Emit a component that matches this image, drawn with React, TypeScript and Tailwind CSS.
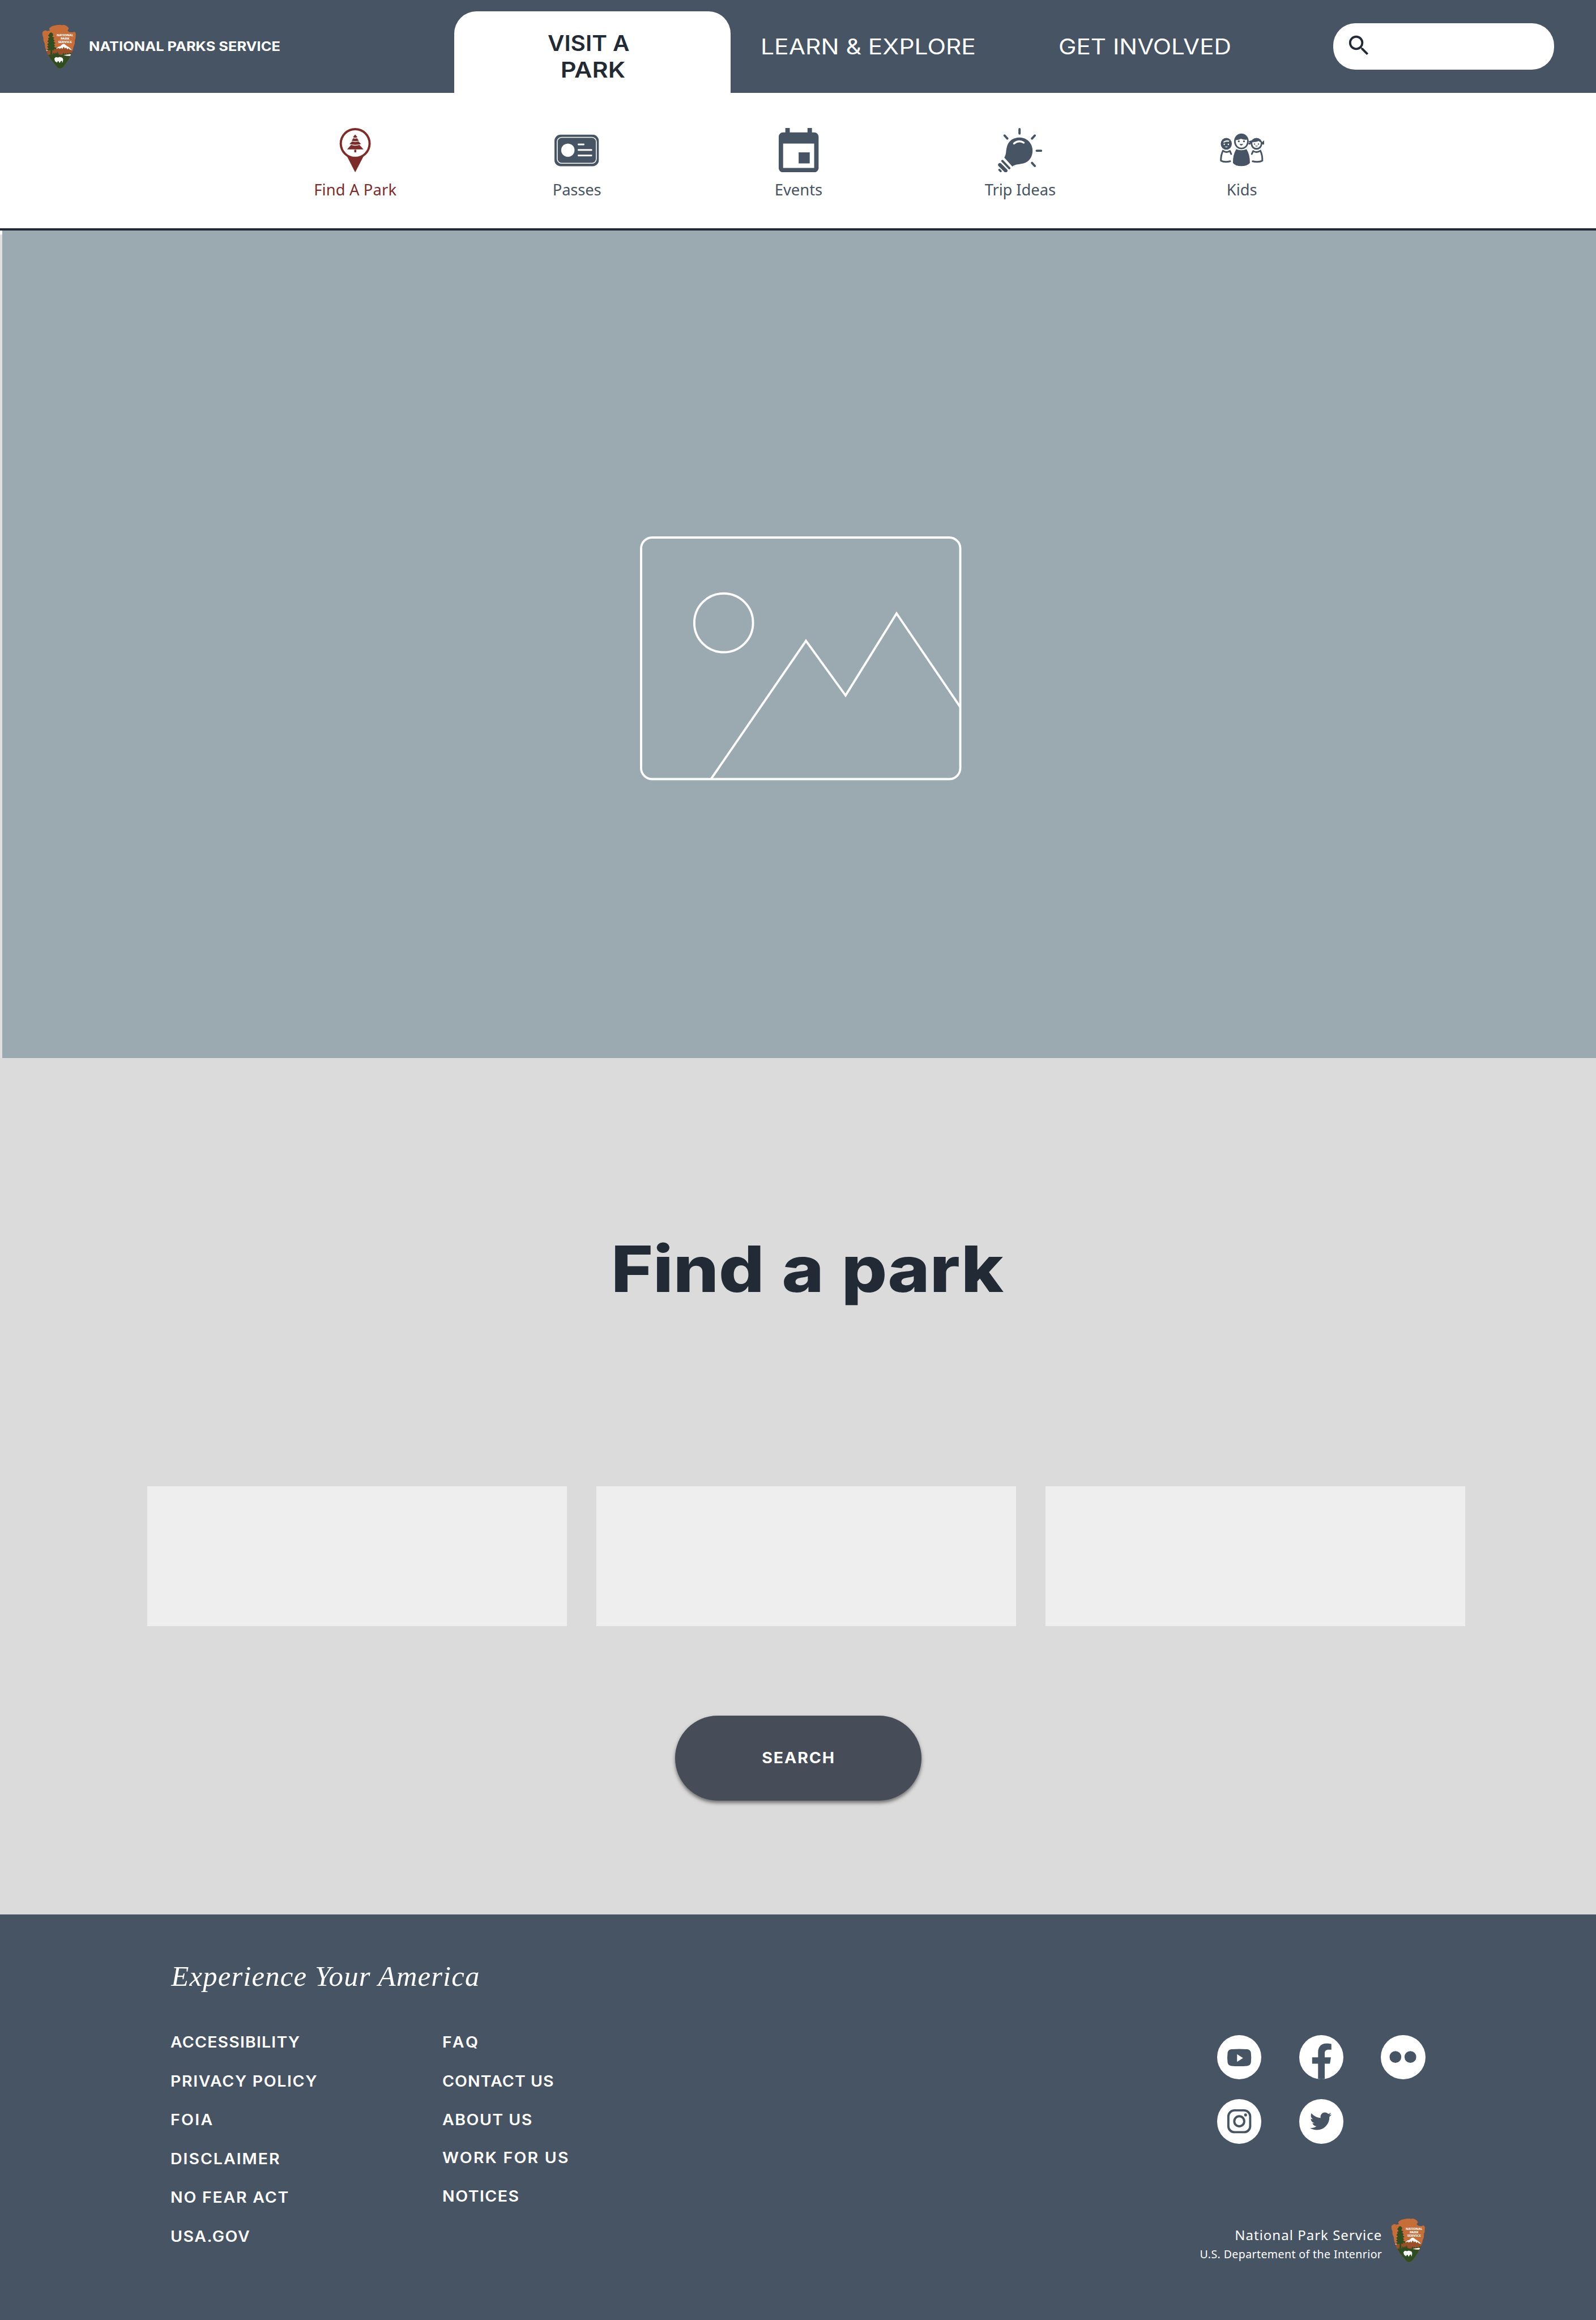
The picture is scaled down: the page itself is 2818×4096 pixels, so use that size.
import type { ReactNode } from 'react';
import { FaTwitter } from 'react-icons/fa';
import { MdSearch } from 'react-icons/md';

const SLATE = '#475464';

function ArrowheadLogo() {
  return (
    <svg viewBox="0 0 184 241" className="h-[80px] w-[62px] shrink-0">
      <defs>
        <clipPath id="arrowhead">
          <path d="M1 43L8 36L18 32L28 36L42 33L38 26L40 19L55 9L80 4L100 2L108 5L116 2L128 6L138 12L145 22L138 34L148 42L165 43L176 40L183 48L182 75L178 85L177 105L170 125L167 142L160 155L150 178L145 190L130 212L112 235L98 240L86 238L60 208L45 188L32 165L24 148L16 125L14 105L7 88L6 70L1 58Z" />
        </clipPath>
      </defs>
      <g clipPath="url(#arrowhead)">
        <rect width="184" height="241" fill="#c66d38" />
        <path d="M0 144L30 134L60 140L86 127L120 116L162 136L184 142V180H0Z" fill="#9a5129" />
        <path d="M16 143L34 136L36 141L24 144ZM76 133L88 122L98 119L110 108L120 106L134 117L148 126L164 141L150 137L142 129L138 136L130 126L124 132L117 122L108 135L106 126L94 134L92 128Z" fill="#fff" />
        <path d="M0 167L30 166L58 164L64 152L68 162L76 152L80 160L84 146L90 164L110 166L116 154L121 163L127 157L132 163L140 156L145 162L154 155L184 160V241H0Z" fill="#2f4d20" />
        <path d="M116 167L152 162L160 166L150 172L132 171Z" fill="#fff" />
        <path d="M44 164L46 140L30 142L26 136L35 130L26 122L34 116L27 108L36 100L28 92L35 84L32 76L40 70L32 60L38 54L42 46L50 44L58 50L60 60L54 66L66 72L60 80L68 88L62 94L72 102L64 108L70 116L64 122L76 128L74 136L64 134L66 142L54 140L56 166Z" fill="#2f4d20" />
        <path d="M66 186L74 178L86 180L96 177L110 182L114 190L112 206L108 208L109 200L104 198L99 203L96 210L92 206L90 200L84 202L80 209L76 204L70 200Z" fill="#fff" />
        <g fill="#fff" textAnchor="middle" className="font-['Noto_Sans'] text-[16px] font-extrabold">
          <text x="124" y="66" textLength="90" lengthAdjust="spacingAndGlyphs">NATIONAL</text>
          <text x="124" y="84" textLength="48" lengthAdjust="spacingAndGlyphs">PARK</text>
          <text x="124" y="102" textLength="74" lengthAdjust="spacingAndGlyphs">SERVICE</text>
        </g>
      </g>
    </svg>
  );
}

function PinIcon() {
  return (
    <svg viewBox="183 63 240 240" className="size-[80px]" fill="#7e2c2a">
      <path d="M256 211L303 303L351 211Z" />
      <circle cx="303" cy="147" r="78" fill="#fff" stroke="#7e2c2a" strokeWidth="12" />
      <path d="M303 98L291 112Q303 120 315 112ZM293 118Q303 123 313 118L323 131Q303 138 284 131ZM287 135Q303 142 320 135L335 150Q303 158 272 150ZM281 154Q303 163 326 154L348 179H259Z" />
      <rect x="298" y="180" width="11" height="15" rx="3" />
    </svg>
  );
}

function PassIcon() {
  return (
    <svg viewBox="0 0 80 80" className="size-[80px]">
      <rect y="12" width="80" height="57" rx="11" fill={SLATE} />
      <rect x="5" y="16.8" width="70.5" height="46.8" rx="8" fill="none" stroke="#fff" strokeWidth="1.6" />
      <circle cx="24.2" cy="40" r="12" fill="#fff" />
      <g fill="#fff">
        <rect x="42" y="28" width="12" height="3.2" rx="1" />
        <rect x="42" y="38" width="26" height="3.2" rx="1" />
        <rect x="42" y="48" width="26" height="3.2" rx="1" />
      </g>
    </svg>
  );
}

function EventIcon() {
  return (
    <svg viewBox="2 1 20 20" className="size-[80px]" fill={SLATE}>
      <path d="M17 12h-5v5h5v-5zM16 1v2H8V1H6v2H5c-1.11 0-1.99.9-1.99 2L3 19c0 1.1.89 2 2 2h14c1.1 0 2-.9 2-2V5c0-1.1-.9-2-2-2h-1V1h-2zm3 18H5V8h14v11z" />
    </svg>
  );
}

function BulbIcon() {
  return (
    <svg viewBox="0 0 80 80" className="size-[80px]" fill="none" stroke={SLATE} strokeWidth="4" strokeLinecap="round">
      <path d="M39 2V10M12 13.5L17 19M66.5 13.5L61.5 19M70 41H78M61.5 63L66.5 68.5" />
      <path d="M11.5 53.5C15.5 47 14 42 16 35C18 24 27 17 39 17C52 17 62.5 27 62.5 41C62.5 53 56 61 46 64C38 66 32 65 26 69.5Z" fill={SLATE} stroke="none" />
      <path d="M29 28Q38 21 46.5 26.5" stroke="#fff" strokeWidth="3.4" />
      <path d="M8 59.5L20.5 72.5" />
      <path d="M3.5 66.5L14 77" strokeWidth="6.5" />
      <path d="M2.5 75.5L5 78" strokeWidth="3.6" />
    </svg>
  );
}

function KidsIcon() {
  return (
    <svg viewBox="0 0 80 80" className="size-[80px]" fill={SLATE}>
      <ellipse cx="11.5" cy="28.5" rx="10" ry="10.6" />
      <path d="M6 25Q11 20.500 17 23L16 25Q11 23.500 7 26.500Z" fill="#fff" />
      <circle cx="7.800" cy="29.500" r="1.300" fill="#fff" />
      <circle cx="15.200" cy="29.500" r="1.300" fill="#fff" />
      <path d="M8.500 33.500H14.500Q11.500 36.500 8.500 33.500Z" fill="#fff" />
      <path d="M5.500 41Q1.500 49 1.800 59Q8 62.500 18.500 60M5.500 41Q11.500 45.500 18 41.500L20.300 47" fill="none" stroke={SLATE} strokeWidth="3" strokeLinecap="round" strokeLinejoin="round" />

      <path d="M51.500 24L58 22L57 29ZM74 27L80 22V30Z" />
      <circle cx="53.500" cy="28" r="2" />
      <circle cx="78" cy="28" r="2" />
      <ellipse cx="66" cy="28.500" rx="10.400" ry="10.600" />
      <path d="M58.500 25.500Q66 25.500 70 23.500Q71 25 73.500 25.500V29Q72.500 36 66 36Q59.500 36 58.500 29Z" fill="#fff" />
      <circle cx="62.500" cy="29" r="1.200" />
      <circle cx="69.500" cy="29" r="1.200" />
      <path d="M63 32H69Q66 35 63 32Z" />
      <path d="M73 41Q76.800 49 76.500 59Q70 62.500 59 60M73 41Q66 45.500 60 41.500L57.500 47" fill="none" stroke={SLATE} strokeWidth="3" strokeLinecap="round" strokeLinejoin="round" />

      <ellipse cx="38.700" cy="24.200" rx="13.200" ry="14.200" />
      <path d="M28.500 22Q34 22 38 19.500Q43 22 49 21V25Q47.500 35.500 38.700 35.500Q30 35.500 28.500 25Z" fill="#fff" />
      <circle cx="34" cy="24" r="1.700" />
      <circle cx="43.400" cy="24" r="1.700" />
      <path d="M35.500 29H42Q40 32 37.500 31.500Q36 31 35.500 29Z" />
      <path d="M29.500 38Q38.500 42 48 38Q54.500 49 54 63Q49 68.800 38.700 68.800Q28 68.800 23.500 63Q23 49 29.500 38Z" />
    </svg>
  );
}

function ImagePlaceholder() {
  return (
    <svg viewBox="0 0 580 440" className="h-[440px] w-[580px]" fill="none" stroke="#fff" strokeWidth="4">
      <rect x="2" y="2" width="576" height="436" rx="20" />
      <circle cx="151" cy="156" r="53" />
      <path d="M128 438L299.500 188.500L371 287L463 139L578 308" />
    </svg>
  );
}

const subNav: { label: string; icon: ReactNode; text: string }[] = [
  { label: 'Find A Park', icon: <PinIcon />, text: 'text-[#7e2c2a] tracking-[0.14px]' },
  { label: 'Passes', icon: <PassIcon />, text: 'text-[#475464] tracking-[-0.2px]' },
  { label: 'Events', icon: <EventIcon />, text: 'text-[#475464] tracking-[0px]' },
  { label: 'Trip Ideas', icon: <BulbIcon />, text: 'text-[#475464] tracking-[-0.1px]' },
  { label: 'Kids', icon: <KidsIcon />, text: 'text-[#475464] tracking-[0px]' },
];

const policyLinks = [
  ['ACCESSIBILITY', 'tracking-[1.1px]'],
  ['PRIVACY POLICY', 'tracking-[1.54px]'],
  ['FOIA', 'tracking-[2.2px]'],
  ['DISCLAIMER', 'tracking-[1.85px]'],
  ['NO FEAR ACT', 'tracking-[1.65px]'],
  ['USA.GOV', 'tracking-[1.4px]'],
];

const aboutLinks = [
  ['FAQ', 'tracking-[3.4px]'],
  ['CONTACT US', 'tracking-[1.0px]'],
  ['ABOUT US', 'tracking-[1.4px]'],
  ['WORK FOR US', '-mt-[2px] tracking-[2.1px]'],
  ['NOTICES', 'tracking-[1.4px]'],
];

function FooterLinks({ links, className }: { links: string[][]; className: string }) {
  return (
    <ul className={className}>
      {links.map(([label, extra]) => (
        <li key={label} className={`origin-left scale-x-[1.08] text-[27px] leading-[70px] font-semibold whitespace-nowrap ${extra}`}>
          {label}
        </li>
      ))}
    </ul>
  );
}

function Disc({ children }: { children: ReactNode }) {
  return <a className="flex size-[80px] items-center justify-center overflow-hidden rounded-full bg-white text-[#475464]">{children}</a>;
}

function SocialLinks() {
  return (
    <div className="grid grid-cols-[80px_80px_80px] gap-x-[68px] gap-y-[36px]">
      <Disc>
        <svg viewBox="0 0 80 80" className="size-[80px]">
          <path d="M26 25.600Q40 24.400 54 25.600Q60 26 61 31.500Q62.200 40.500 61 49.500Q60 55 54 55.600Q40 56.700 26 55.600Q20 55 19 49.500Q17.800 40.500 19 31.500Q20 26 26 25.600Z" fill={SLATE} />
          <path d="M36 34.500L46.800 41.500L36 48.400Z" fill="#fff" />
        </svg>
      </Disc>
      <Disc>
        <svg viewBox="0 0 80 80" className="size-[80px]">
          <path d="M34 80V51.500H23.300V40H34V31C34 21 40 15.200 49 15.200C53 15.200 58 16 58 16V26.300H53C48 26.300 46 29 46 32.500V40H57.200L55.400 51.500H46V80Z" fill={SLATE} />
        </svg>
      </Disc>
      <Disc>
        <svg viewBox="0 0 80 80" className="size-[80px]" fill={SLATE}>
          <circle cx="26.400" cy="39.500" r="10.600" />
          <circle cx="53.400" cy="39.500" r="10.600" />
        </svg>
      </Disc>
      <Disc>
        <svg viewBox="0 0 80 80" className="size-[80px]" fill="none" stroke={SLATE} strokeWidth="4">
          <rect x="20.300" y="20.300" width="39.400" height="39.400" rx="11" />
          <circle cx="40" cy="40" r="9" />
          <circle cx="51.400" cy="28.500" r="2.600" fill={SLATE} stroke="none" />
        </svg>
      </Disc>
      <Disc>
        <FaTwitter className="mr-[1px] size-[39px]" />
      </Disc>
    </div>
  );
}

export default function App() {
  return (
    <div className="h-[4096px] w-[2818px] overflow-hidden bg-[#475464]">
      <div className="flex h-[4187px] w-[2881px] flex-col bg-[#dbdbdb] font-['Inter',sans-serif] [zoom:0.97847]">
        <header className="flex h-[168px] shrink-0 items-center bg-[#475464] text-white">
          <div className="flex w-[820px] items-center pl-[76px]">
            <ArrowheadLogo />
            <span className="ml-[22px] origin-left scale-x-[1.13] text-[23px] font-bold whitespace-nowrap">NATIONAL PARKS SERVICE</span>
          </div>
          <div className="flex h-[148px] w-[498px] flex-col items-center self-end rounded-t-[40px] bg-white pt-[35px] text-[38.5px] leading-[48px] font-semibold text-[#222b35]">
            <span className="mr-[13px] scale-x-[1.075]">VISIT A</span>
            <span className="ml-[2px] scale-x-[1.147]">PARK</span>
          </div>
          <div className="ml-[55px] w-[537px] pt-[2px]">
            <span className="inline-block origin-left scale-x-[1.13] text-[38.5px] whitespace-nowrap">LEARN &amp; EXPLORE</span>
          </div>
          <div className="w-[496px] pt-[2px]">
            <span className="inline-block origin-left scale-x-[1.121] text-[38.5px] whitespace-nowrap">GET INVOLVED</span>
          </div>
          <div className="flex h-[84px] w-[398px] items-center rounded-[40px] bg-white pb-[4px] pl-[22px] text-[#222b35]">
            <MdSearch className="size-[48px]" />
          </div>
        </header>

        <nav className="flex h-[244px] shrink-0 bg-white pt-[63px] pl-[441px]">
          {subNav.map(({ label, icon, text }) => (
            <a key={label} className="flex w-[400px] flex-col items-center gap-[12px]">
              {icon}
              <span className={`font-['Noto_Sans',sans-serif] text-[28px] leading-[38px] ${text}`}>{label}</span>
            </a>
          ))}
        </nav>
        <div className="h-[4px] shrink-0 bg-[#222b35]" />

        <section className="flex h-[1493px] shrink-0">
          <div className="w-[4px] shrink-0 border-t-8 border-white bg-[#e0e0e0]" />
          <div className="grow bg-[#9ba9b0] pt-[552px] pl-[1151px]">
            <ImagePlaceholder />
          </div>
        </section>

        <main className="flex h-[1545px] shrink-0 flex-col pt-[311px]">
          <h1 className="ml-[1103px] w-fit origin-left scale-x-[1.118] text-[115.5px] leading-[140px] font-extrabold [word-spacing:3px] whitespace-nowrap text-[#222b35]">Find a park</h1>
          <div className="mt-[322px] flex gap-[53.5px] pl-[266px]">
            <div className="h-[252px] w-[757px] bg-[#eeeeee]" />
            <div className="h-[252px] w-[757px] bg-[#eeeeee]" />
            <div className="h-[252px] w-[757px] bg-[#eeeeee]" />
          </div>
          <button className="mt-[162px] ml-[1218px] flex h-[153px] w-[445px] items-center justify-center rounded-full bg-[#464d59] text-white shadow-[0_4px_7px_rgba(0,0,0,0.5)]">
            <span className="scale-x-[1.08] pl-[1px] text-[27px] font-bold tracking-[1.8px]">SEARCH</span>
          </button>
        </main>

        <footer className="flex grow justify-between bg-[#475464] pr-[309px] pl-[308px] text-white">
          <div className="pt-[80px]">
            <p className="pl-px font-['Liberation_Serif',serif] text-[52px] leading-[64px] tracking-[1.12px] italic">Experience Your America</p>
            <div className="mt-[52px] flex">
              <FooterLinks links={policyLinks} className="w-[490px]" />
              <FooterLinks links={aboutLinks} className="w-[240px]" />
            </div>
          </div>
          <div className="flex flex-col items-end pt-[218px]">
            <SocialLinks />
            <div className="mt-[134px] flex h-[80px] gap-[16px]">
              <div className="flex flex-col items-end pt-[14px] font-['Noto_Sans',sans-serif] leading-[34px] whitespace-nowrap">
                <span className="text-[24.500px] tracking-[1.05px]">National Park Service</span>
                <span className="text-[20px] tracking-[0.4px]">U.S. Departement of the Intenrior</span>
              </div>
              <ArrowheadLogo />
            </div>
          </div>
        </footer>
      </div>
    </div>
  );
}
